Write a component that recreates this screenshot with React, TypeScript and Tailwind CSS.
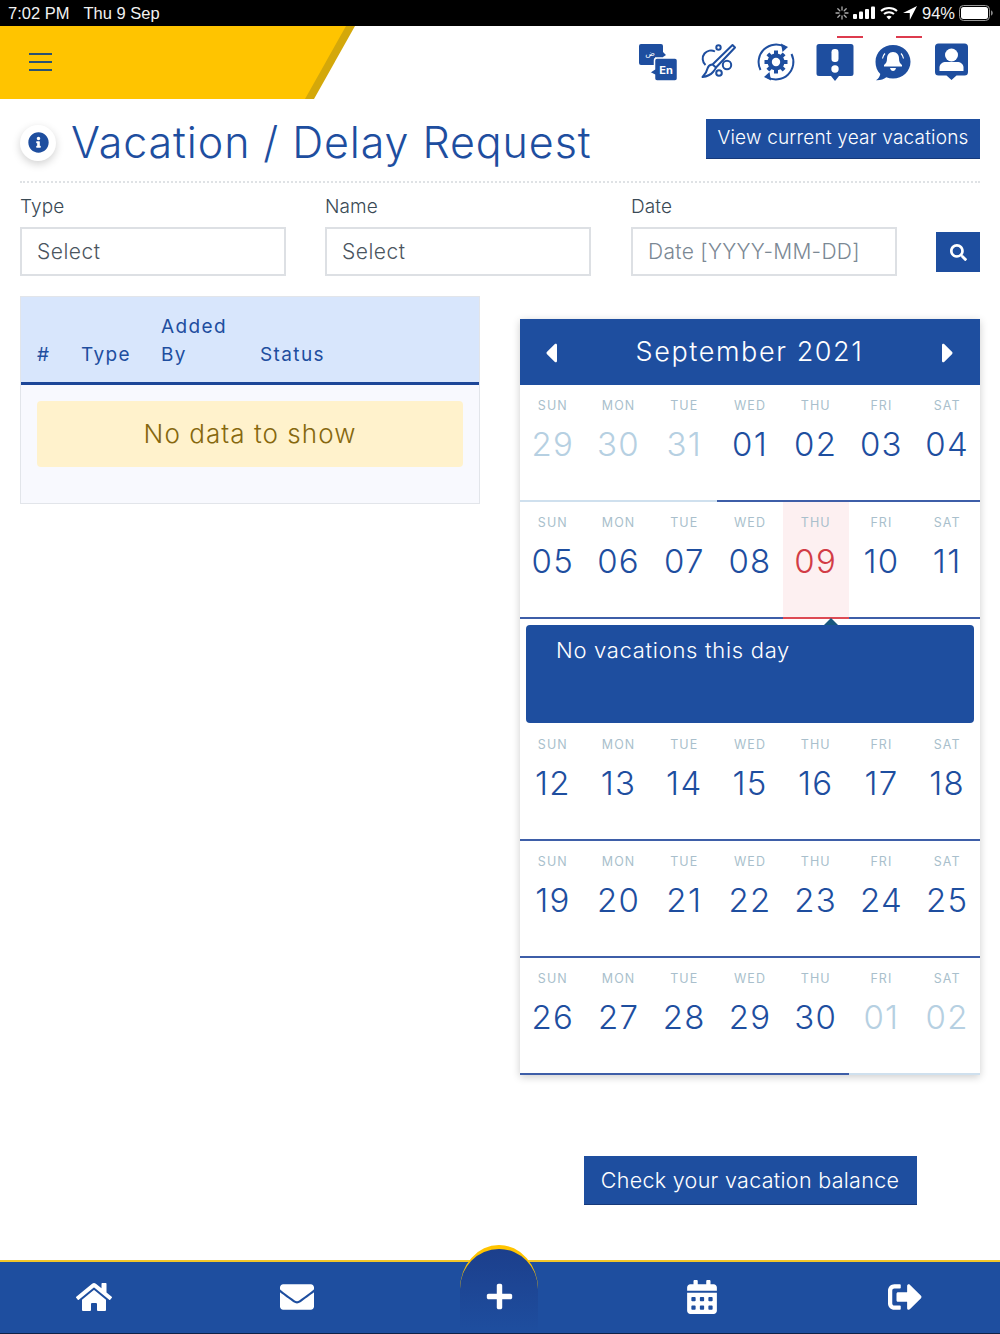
import React from "react";
import { FaHome, FaEnvelope, FaPlus, FaCalendarAlt, FaSignOutAlt, FaInfoCircle, FaSearch, FaCaretLeft, FaCaretRight } from "react-icons/fa";

const B = "#1e4e9f";

function StatusIcons() {
  return (
    <div className="flex items-center text-[#f2f2f2]">
      <svg width="14" height="14" viewBox="0 0 14 14" className="mr-[4px]" stroke="#aaa" strokeWidth="1.3" strokeLinecap="round">
        <path d="M7 1v3M7 10v3M1 7h3M10 7h3M2.8 2.8l2 2M9.2 9.2l2 2M2.8 11.2l2-2M9.2 4.800l2-2" />
      </svg>
      <svg width="22" height="14" viewBox="0 0 22 14" fill="#fff" className="mr-[5px]">
        <rect x="0" y="8" width="4" height="5" rx="1" /><rect x="6" y="5.500" width="4" height="7.500" rx="1" /><rect x="12" y="3" width="4" height="10" rx="1" /><rect x="18" y="0.500" width="4" height="12.500" rx="1" />
      </svg>
      <svg width="18" height="14" viewBox="0 0 18 14" fill="none" stroke="#fff" strokeWidth="2" className="mr-[5px]">
        <path d="M1 5c4.500-4 11.500-4 16 0M4 8c2.700-2.400 7.300-2.400 10 0" /><path d="M9 13.500l-2.600-2.800c1.500-1.200 3.700-1.200 5.200 0z" fill="#fff" stroke="none" />
      </svg>
      <svg width="14" height="14" viewBox="0 0 13 13" fill="#fff" className="mr-[5px]"><path d="M13 0L0 6.500h6.300V13z" /></svg>
      <span className="text-[16.5px] leading-none mr-[4px]">94%</span>
      <svg width="35" height="16" viewBox="0 0 35 16" fill="none">
        <rect x="0.500" y="0.500" width="30" height="15" rx="4" stroke="#999" /><rect x="2" y="2" width="27" height="12" rx="2.500" fill="#fff" /><path d="M32 5.500c1.200.3 1.800 1.300 1.800 2.500s-.6 2.200-1.800 2.500z" fill="#888" />
      </svg>
    </div>
  );
}

const TranslateIcon = () => (
  <svg width="40" height="40" viewBox="0 0 40 40">
    <path d="M3 2h20a2 2 0 0 1 2 2v6l3 3-3 2v6a2 2 0 0 1-2 2H3a2 2 0 0 1-2-2V4a2 2 0 0 1 2-2z" fill={B} />
    <path d="M17 16h20a2.500 2.500 0 0 1 2.500 2.500v18a2.500 2.500 0 0 1-2.500 2.500H19a2.500 2.500 0 0 1-2.500-2.500v-3.500l-5-2.500 5-3.500V18.500A2.500 2.500 0 0 1 19 16z" fill={B} stroke="#fff" strokeWidth="1.500" />
    <text x="28" y="32" fontSize="11" fontWeight="700" fill="#fff" textAnchor="middle" fontFamily="Inter, sans-serif">En</text>
    <text x="12" y="14" fontSize="8" fill="#fff" textAnchor="middle" fontFamily="'DejaVu Sans', sans-serif">ض</text>
  </svg>
);
const BrushIcon = () => (
  <svg width="40" height="40" viewBox="0 0 40 40" fill="none" stroke={B} strokeWidth="2" strokeLinejoin="round">
    <path d="M35.500 3l2.500 2.500-19 20-3.500-3z" />
    <path d="M15 22.500c-3 .5-4 2-4.500 4-.5 2.500-2.500 6-5 8.500 4-.5 8-2 10.500-5 1.500-1.600 2.500-3.200 3-4.500" />
    <path d="M18 9.500c-3.500-2-8-1-10.500 2-2.800 3.500-2.300 8.500 1 11.500" />
    <circle cx="21.500" cy="5.500" r="2.200" /><circle cx="30" cy="23" r="4.200" /><circle cx="22" cy="31" r="2.800" />
  </svg>
);
const GearIcon = () => (
  <svg width="40" height="40" viewBox="0 0 40 40" fill="none">
    <path d="M4.500 28A17.500 17.500 0 0 1 29 5" stroke={B} strokeWidth="2" />
    <path d="M25 1.500l7 3.500-5.500 5z" fill={B} />
    <path d="M35.500 12A17.500 17.500 0 0 1 11 35" stroke={B} strokeWidth="2" />
    <path d="M15 38.500l-7-3.500 5.500-5z" fill={B} />
    <circle cx="20" cy="20" r="8.500" fill={B} />
    <g stroke={B} strokeWidth="4">
      <path d="M20 8.500v23M8.500 20h23M11.900 11.900l16.200 16.200M28.100 11.900l-16.200 16.200" />
    </g>
    <circle cx="20" cy="20" r="4.200" fill="#fff" />
  </svg>
);
const AlertIcon = () => (
  <svg width="40" height="40" viewBox="0 0 40 40">
    <path d="M4 2h32a2.500 2.500 0 0 1 2.500 2.500v27a2.500 2.500 0 0 1-2.500 2.500H24l-4 5-4-5H4a2.500 2.500 0 0 1-2.500-2.500v-27A2.500 2.500 0 0 1 4 2z" fill={B} />
    <rect x="16.500" y="7" width="7" height="13" rx="3.200" fill="#fff" /><circle cx="20" cy="27" r="3.700" fill="#fff" />
  </svg>
);
const BellIcon = () => (
  <svg width="40" height="40" viewBox="0 0 40 40">
    <g transform="translate(-1 0)">
      <path d="M20 3c9.700 0 17.500 7.300 17.500 16.800S29.700 36.500 20 36.500c-2.500 0-4.700-.4-6.700-1.200-2.500 2-6 3.200-10.300 3 2.500-1.800 3.800-3.800 4.300-6.300C4 28.900 2.500 24.700 2.500 19.800 2.500 10.300 10.300 3 20 3z" fill={B} />
      <path d="M20 10c4 0 6 3 6 6.500 0 3.500 1 5 3 6.500v1.500H11V23c2-1.500 3-3 3-6.500S16 10 20 10z" fill="#fff" />
      <path d="M17 26h6c-.5 2-1.500 3-3 3s-2.500-1-3-3z" fill="#fff" />
      <path d="M12 11.500c-1.500 1.500-2.200 3-2.500 5M28 11.500c1.500 1.500 2.200 3 2.500 5" stroke="#fff" strokeWidth="1.200" fill="none" />
    </g>
  </svg>
);
const UserIcon = () => (
  <svg width="40" height="40" viewBox="0 0 40 40">
    <g transform="translate(-1.500 0)">
      <path d="M7 1.500h26a3.500 3.500 0 0 1 3.500 3.500v25a3.500 3.500 0 0 1-3.500 3.500h-8L20 38l-5-4.500H7A3.500 3.500 0 0 1 3.500 30V5A3.500 3.500 0 0 1 7 1.500z" fill={B} />
      <circle cx="20" cy="13" r="6.500" fill="#fff" />
      <path d="M8 29v-3.500c0-3.500 3-5.500 6.500-5.500h11c3.500 0 6.500 2 6.500 5.500V29z" fill="#fff" />
    </g>
  </svg>
);

function Field({ label, value, muted }: { label: string; value: string; muted?: boolean }) {
  return (
    <div className="w-[266px]">
      <div className="mt-[1px] text-[19px] leading-[24px] tracking-[0.1px] text-[#3a4a55] font-light mb-[8px]">{label}</div>
      <div className={`h-[49px] border-2 border-[#dde0e4] flex items-center pl-[15px] text-[21px] font-light ${muted ? "text-[#7b8894] tracking-[0.3px]" : "text-[#4b5560] tracking-[0.5px]"}`}>{value}</div>
    </div>
  );
}

const DAYS = ["SUN", "MON", "TUE", "WED", "THU", "FRI", "SAT"];

function Week({ days, muted = [], today }: { days: string[]; muted?: number[]; today?: number }) {
  return (
    <div className="grid grid-cols-7">
      {days.map((d, i) => {
        const isMuted = muted.includes(i);
        const isToday = today === i;
        return (
          <div key={i} className={`h-[117px] flex flex-col items-center border-b-2 ${isMuted ? "border-[#cfe0ee]" : isToday ? "border-[#dd4a54] bg-[#fdf0f1]" : "border-[#3e5ea8]"}`}>
            <div className="text-[12.5px] leading-[16px] mt-[13px] tracking-[1.1px] text-[#a9bfcc]">{DAYS[i]}</div>
            <div className={`text-[33px] leading-[40px] mt-[10px] font-light tracking-[1.3px] ${isToday ? "text-[#d23c46]" : isMuted ? "text-[#b6d0e2]" : "text-[#1e4e9f]"}`}>{d}</div>
          </div>
        );
      })}
    </div>
  );
}

export default function App() {
  return (
    <div className="relative w-[1000px] h-[1334px] bg-white flex flex-col overflow-hidden" style={{ fontFamily: "Inter, 'Noto Sans', sans-serif" }}>
      {/* status bar */}
      <div className="h-[26px] bg-black flex items-center justify-between pl-[8px] pr-[6px] text-[#f2f2f2] shrink-0" style={{ fontFamily: "'Liberation Sans', sans-serif" }}>
        <div className="text-[16.5px] leading-none flex gap-[14px]"><span>7:02 PM</span><span>Thu 9 Sep</span></div>
        <StatusIcons />
      </div>

      {/* header */}
      <div className="h-[73px] flex items-center justify-between shrink-0 relative">
        <div className="relative w-[355px] h-full">
          <div className="absolute inset-0 bg-[#d4a80a] [clip-path:polygon(0_0,100%_0,314px_100%,0_100%)]" />
          <div className="absolute inset-0 bg-[#ffc400] [clip-path:polygon(0_0,346px_0,305px_100%,0_100%)] flex items-center pl-[29px]">
            <div className="flex flex-col gap-[6px] -mt-[1px]">
              <div className="w-[23px] h-[2px] bg-[#2a5272]" />
              <div className="w-[23px] h-[2px] bg-[#2a5272]" />
              <div className="w-[23px] h-[2px] bg-[#2a5272]" />
            </div>
          </div>
        </div>
        <div className="flex items-start gap-[19px] pr-[27px] h-full pt-[16px]">
          <TranslateIcon />
          <BrushIcon />
          <GearIcon />
          <div className="relative"><div className="absolute -top-[6px] left-[22px] w-[26px] h-[2px] bg-[#dd3b4e]" /><AlertIcon /></div>
          <div className="relative"><div className="absolute -top-[6px] left-[22px] w-[26px] h-[2px] bg-[#dd3b4e]" /><BellIcon /></div>
          <UserIcon />
        </div>
      </div>

      {/* title */}
      <div className="mx-[20px] h-[84px] border-b-2 border-dotted border-[#dfe2e5] flex items-start justify-between shrink-0">
        <div className="flex items-center mt-[18px]">
          <div className="w-[36px] h-[36px] rounded-full bg-white shadow-[0_3px_8px_rgba(0,0,0,0.18)] flex items-center justify-center text-[#1e4e9f]">
            <FaInfoCircle size={21} />
          </div>
          <h1 className="ml-[15px] -mt-[1px] text-[43px] leading-[52px] font-light text-[#1e4e9f] tracking-[0.9px]">Vacation / Delay Request</h1>
        </div>
        <button className="mt-[20px] w-[274px] h-[40px] bg-[#1e4e9f] text-white text-[19px] font-light tracking-[0.2px] border-b border-[#16397a]">View current year vacations</button>
      </div>

      {/* filters */}
      <div className="mx-[20px] mt-[11px] flex items-end shrink-0">
        <Field label="Type" value="Select" />
        <div className="w-[39px]" />
        <Field label="Name" value="Select" />
        <div className="w-[40px]" />
        <Field label="Date" value="Date [YYYY-MM-DD]" muted />
        <div className="ml-auto mb-[4px] w-[44px] h-[40px] bg-[#1e4e9f] flex items-center justify-center text-white"><FaSearch size={17} /></div>
      </div>

      {/* main */}
      <div className="mx-[20px] mt-[20px] flex justify-between items-start flex-1">
        {/* table */}
        <div className="w-[460px] border border-[#e2e5ea] bg-[#f8f9fe]">
          <div className="bg-[#d8e6fc] h-[88px] border-b-[3px] border-[#1c4698] text-[#1e4e9f] text-[19px] leading-[28px] tracking-[1.4px] flex items-end pb-[13px]">
            <div className="w-[60px] pl-[16px]">#</div>
            <div className="w-[80px]">Type</div>
            <div className="w-[99px]">Added<br />By</div>
            <div>Status</div>
          </div>
          <div className="pt-[16px] px-[16px] pb-[36px]">
            <div className="h-[66px] pb-[2px] rounded-[4px] bg-[#fff2cc] flex items-center justify-center text-[#86680e] text-[26px] font-light tracking-[1.05px]">No data to show</div>
          </div>
        </div>

        {/* calendar + button */}
        <div className="w-[460px] mt-[23px] flex flex-col items-center">
          <div className="w-full shadow-[0_2px_8px_rgba(0,0,0,0.2)] bg-white">
            <div className="h-[66px] pt-[1px] bg-[#1e4e9f] flex items-center justify-between pl-[15px] pr-[16px] text-white">
              <FaCaretLeft size={32} />
              <span className="text-[27px] font-light tracking-[1.6px]">September 2021</span>
              <FaCaretRight size={32} />
            </div>
            <Week days={["29", "30", "31", "01", "02", "03", "04"]} muted={[0, 1, 2]} />
            <Week days={["05", "06", "07", "08", "09", "10", "11"]} today={4} />
            <div className="relative h-[105px] px-[6px] pt-[6px]">
              <div className="absolute top-[-1px] left-[304px] w-0 h-0 border-l-[7px] border-r-[7px] border-b-[7px] border-l-transparent border-r-transparent border-b-[#17577f]" />
              <div className="h-[98px] rounded-[4px] bg-[#1e4e9f] text-white text-[22px] font-light tracking-[0.7px] pl-[30px] pt-[9px] leading-[32px]">No vacations this day</div>
            </div>
            <Week days={["12", "13", "14", "15", "16", "17", "18"]} />
            <Week days={["19", "20", "21", "22", "23", "24", "25"]} />
            <Week days={["26", "27", "28", "29", "30", "01", "02"]} muted={[5, 6]} />
          </div>
          <button className="mt-[81px] w-[333px] h-[49px] bg-[#1e4e9f] text-white text-[21.5px] font-light tracking-[0.3px] border-b border-[#16397a]">Check your vacation balance</button>
        </div>
      </div>

      {/* bottom nav */}
      <div className="relative h-[74px] shrink-0 bg-[#1e4e9f] border-t-2 border-b border-t-[#f3c62a] border-b-[#0f2247] grid grid-cols-5 items-center text-white pb-[2px]">
        <div className="absolute left-[460px] -top-[17px] w-[78px] h-[88px] rounded-t-[50%] border-t-[4px] border-[#ffc400] bg-gradient-to-b from-[#1c3f8c] to-[#1e4e9f]" />
        <div className="flex justify-center pr-[12px]"><FaHome size={36} /></div>
        <div className="flex justify-center pr-[6px]"><FaEnvelope size={34} /></div>
        <div className="flex justify-center pr-[1px] relative"><FaPlus size={29} /></div>
        <div className="flex justify-center pl-[4px]"><FaCalendarAlt size={34} /></div>
        <div className="flex justify-center pl-[10px]"><FaSignOutAlt size={34} /></div>
      </div>
    </div>
  );
}
